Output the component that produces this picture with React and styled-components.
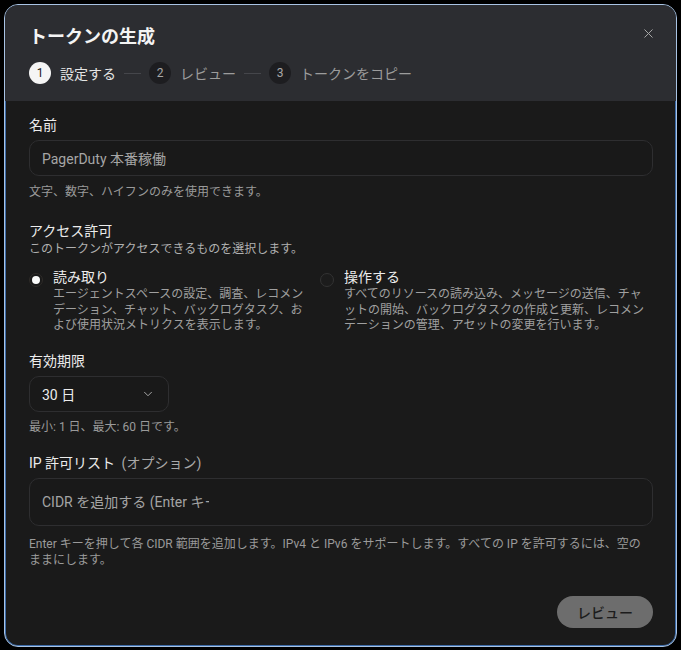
import { useState } from "react";
import styled, { createGlobalStyle } from "styled-components";
import { X, ChevronDown } from "lucide-react";

const GlobalStyle = createGlobalStyle`
  html, body {
    margin: 0;
    background: #000;
  }
  body {
    font-family: Roboto, "Noto Sans CJK JP", sans-serif;
    color: #e8e8e8;
  }
  * {
    box-sizing: border-box;
  }
`;

const steps = ["設定する", "レビュー", "トークンをコピー"];

const permissions = [
  {
    id: "read",
    title: "読み取り",
    text: "エージェントスペースの設定、調査、レコメンデーション、チャット、バックログタスク、および使用状況メトリクスを表示します。",
  },
  {
    id: "write",
    title: "操作する",
    text: "すべてのリソースの読み込み、メッセージの送信、チャットの開始、バックログタスクの作成と更新、レコメンデーションの管理、アセットの変更を行います。",
  },
];

const App = () => {
  const [access, setAccess] = useState("read");

  return (
    <>
      <GlobalStyle />
      <Page>
        <Modal>
          <Header>
            <TitleRow>
              <Title>トークンの生成</Title>
              <CloseButton aria-label="閉じる">
                <X size={15} strokeWidth={1.6} />
              </CloseButton>
            </TitleRow>
            <Steps>
              {steps.map((label, i) => (
                <Step key={label}>
                  {i > 0 && <StepLine />}
                  <StepNumber $active={i === 0}>{i + 1}</StepNumber>
                  <StepLabel $active={i === 0}>{label}</StepLabel>
                </Step>
              ))}
            </Steps>
          </Header>

          <Body>
            <Label>名前</Label>
            <Field>
              <FieldText>PagerDuty 本番稼働</FieldText>
            </Field>
            <Help>文字、数字、ハイフンのみを使用できます。</Help>

            <Label $top={21}>アクセス許可</Label>
            <SubText>このトークンがアクセスできるものを選択します。</SubText>
            <RadioGrid>
              {permissions.map((p) => (
                <RadioOption key={p.id} onClick={() => setAccess(p.id)}>
                  <Radio $checked={access === p.id} />
                  <div>
                    <RadioTitle>{p.title}</RadioTitle>
                    <RadioText>{p.text}</RadioText>
                  </div>
                </RadioOption>
              ))}
            </RadioGrid>

            <Label $top={17}>有効期限</Label>
            <Select>
              <span>30 日</span>
              <ChevronDown size={14} strokeWidth={1.5} color="#b8b8b8" />
            </Select>
            <Help $top={7}>最小: 1 日、最大: 60 日です。</Help>

            <Label $top={18}>
              IP 許可リスト <Optional>(オプション)</Optional>
            </Label>
            <TagField>
              <TagInput placeholder="CIDR を追加する (Enter キーを押して追加)" />
            </TagField>
            <Help $top={10} $inset={8}>
              Enter キーを押して各 CIDR 範囲を追加します。IPv4 と IPv6 をサポートします。すべての IP を許可するには、空のままにします。
            </Help>

            <Footer>
              <ReviewButton>レビュー</ReviewButton>
            </Footer>
          </Body>
        </Modal>
      </Page>
    </>
  );
};

const Page = styled.div`
  padding: 4px 4px 0 4px;
  min-height: 650px;
`;

const Modal = styled.div`
  width: 673px;
  height: 643px;
  border: 1.5px solid #a9c4e4;
  border-radius: 14px;
  background: #1a1a1a;
  overflow: hidden;
  display: flex;
  flex-direction: column;
  box-shadow: inset 0 0 0 1px #3b6aa8;
`;

const Header = styled.div`
  background: #2c2d31;
  padding: 20px 20px 17px 24px;
`;

const TitleRow = styled.div`
  display: flex;
  justify-content: space-between;
  align-items: flex-start;
`;

const Title = styled.h1`
  margin: 0;
  font-size: 18px;
  line-height: 24px;
  font-weight: 700;
  color: #f4f4f4;
`;

const CloseButton = styled.button`
  background: none;
  border: none;
  padding: 0;
  margin-top: 1px;
  color: #a6a6a6;
  display: flex;
  cursor: pointer;
`;

const Steps = styled.div`
  display: flex;
  align-items: center;
  margin-top: 13px;
`;

const Step = styled.div`
  display: flex;
  align-items: center;
`;

const StepLine = styled.div`
  width: 17px;
  height: 1px;
  background: #45464b;
  margin: 0 8px;
`;

const StepNumber = styled.span`
  width: 22px;
  height: 22px;
  border-radius: 50%;
  display: flex;
  align-items: center;
  justify-content: center;
  font-size: 12px;
  background: ${(p) => (p.$active ? "#f5f5f5" : "#1d1d20")};
  color: ${(p) => (p.$active ? "#1a1a1a" : "#a9a9a9")};
`;

const StepLabel = styled.span`
  margin-left: 9px;
  font-size: 14px;
  color: ${(p) => (p.$active ? "#e4e4e4" : "#9c9c9c")};
`;

const Body = styled.div`
  flex: 1;
  padding: 14px 23px 0 24px;
  display: flex;
  flex-direction: column;
`;

const Label = styled.div`
  margin-top: ${(p) => p.$top || 0}px;
  font-size: 14px;
  line-height: 20px;
  font-weight: 400;
  color: #ececec;
`;

const Optional = styled.span`
  margin-left: 3px;
  color: #a8a8a8;
`;

const Field = styled.div`
  margin-top: 5px;
  height: 36px;
  border: 1px solid #2e2e30;
  border-radius: 10px;
  background: #191919;
  display: flex;
  align-items: center;
  padding: 0 12px;
`;

const FieldText = styled.span`
  font-size: 14px;
  color: #a6a6a6;
`;

const Help = styled.div`
  margin-top: ${(p) => p.$top || 8}px;
  padding-right: ${(p) => p.$inset || 0}px;
  font-size: 12px;
  line-height: 16px;
  color: #9a9a9a;
`;

const SubText = styled.div`
  font-size: 12px;
  line-height: 16px;
  color: #b0b0b0;
`;

const RadioGrid = styled.div`
  display: grid;
  grid-template-columns: 282px 1fr;
  column-gap: 9px;
  margin-top: 10px;
`;

const RadioOption = styled.label`
  display: flex;
  align-items: flex-start;
  gap: 10px;
  cursor: pointer;
`;

const Radio = styled.span`
  flex: none;
  width: 14px;
  height: 14px;
  margin-top: 6px;
  border-radius: 50%;
  border: 1px solid ${(p) => (p.$checked ? "#2e2b28" : "#333")};
  background: ${(p) => (p.$checked ? "#1a1a1a" : "#1c1c1c")};
  display: flex;
  align-items: center;
  justify-content: center;

  &::after {
    content: "";
    width: 8px;
    height: 8px;
    border-radius: 50%;
    background: #fafafa;
    display: ${(p) => (p.$checked ? "block" : "none")};
  }
`;

const RadioTitle = styled.div`
  font-size: 14px;
  line-height: 20px;
  color: #ececec;
`;

const RadioText = styled.div`
  font-size: 12px;
  line-height: 15.5px;
  color: #a0a0a0;
  line-break: strict;
`;

const Select = styled.div`
  margin-top: 5px;
  width: 140px;
  height: 36px;
  border: 1px solid #2e2e30;
  border-radius: 10px;
  background: #191919;
  display: flex;
  align-items: center;
  justify-content: space-between;
  padding: 0 13px 0 12px;
  font-size: 14px;
  color: #ececec;
`;

const TagField = styled.div`
  margin-top: 5px;
  height: 48px;
  border: 1px solid #2e2e30;
  border-radius: 10px;
  background: #191919;
  display: flex;
  align-items: center;
  padding: 0 12px;
`;

const TagInput = styled.input`
  width: 167px;
  background: transparent;
  border: none;
  outline: none;
  padding: 0;
  font-family: inherit;
  font-size: 14px;
  color: #e0e0e0;

  &::placeholder {
    color: #a4a4a4;
  }
`;

const Footer = styled.div`
  display: flex;
  justify-content: flex-end;
  margin-top: 28px;
`;

const ReviewButton = styled.button`
  width: 96px;
  height: 32px;
  border: none;
  border-radius: 16px;
  background: #6d6d6d;
  color: #1c1c1c;
  font-family: inherit;
  font-size: 14px;
  font-weight: 500;
  cursor: pointer;
`;

export default App;
